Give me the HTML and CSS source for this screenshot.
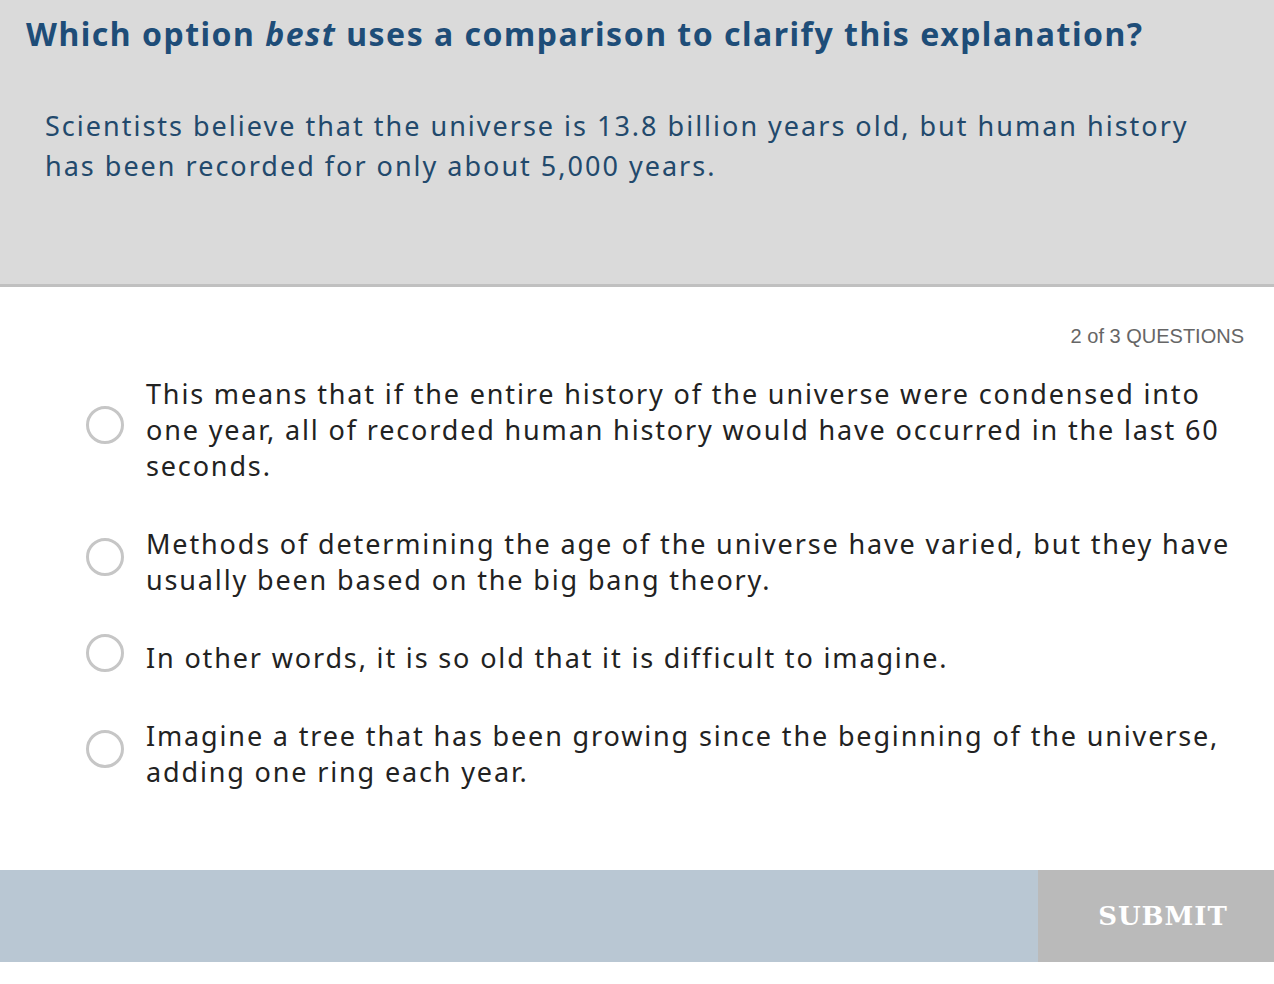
FILE: index.html
```html
<!DOCTYPE html>
<html lang="en">
<head>
<meta charset="utf-8">
<title>Question 2 of 3</title>
<link rel="stylesheet" href="styles.css">
</head>
<body>
<div class="page">
  <header class="stem">
    <h1 class="prompt">Which option <em>best</em> uses a comparison to clarify this explanation?</h1>
    <p class="passage">Scientists believe that the universe is 13.8 billion years old, but human history has been recorded for only about 5,000 years.</p>
  </header>
  <main class="body">
    <div class="progress">2 of 3 QUESTIONS</div>
    <ul class="options">
      <li class="option"><span class="radio"></span><span class="label">This means that if the entire history of the universe were condensed into one year, all of recorded human history would have occurred in the last 60 seconds.</span></li>
      <li class="option"><span class="radio"></span><span class="label">Methods of determining the age of the universe have varied, but they have usually been based on the big bang theory.</span></li>
      <li class="option"><span class="radio"></span><span class="label">In other words, it is so old that it is difficult to imagine.</span></li>
      <li class="option"><span class="radio"></span><span class="label">Imagine a tree that has been growing since the beginning of the universe, adding one ring each year.</span></li>
    </ul>
  </main>
  <footer class="footer">
    <div class="footer-fill"></div>
    <button class="submit">SUBMIT</button>
  </footer>
</div>
</body>
</html>
```
FILE: styles.css
```css
html, body {
  margin: 0;
  padding: 0;
  background: #ffffff;
}
.page {
  width: 1274px;
  font-family: "Noto Sans", "Open Sans", sans-serif;
}
.stem {
  background: #dadada;
  border-bottom: 3px solid #c0c0c0;
  height: 284px;
  padding: 0;
}
.prompt {
  margin: 0;
  padding: 13px 0 0 26px;
  font-size: 32px;
  line-height: 42px;
  font-weight: 700;
  color: #1e4d78;
  letter-spacing: 1.5px;
}
.prompt em {
  font-style: italic;
}
.passage {
  margin: 0;
  padding: 51px 60px 0 45px;
  font-size: 27px;
  line-height: 40px;
  color: #22496c;
  letter-spacing: 2px;
}
.body {
  padding: 37px 30px 0 0;
  height: 583px;
  box-sizing: border-box;
}
.progress {
  text-align: right;
  font-family: "Liberation Sans", Arial, sans-serif;
  font-size: 20px;
  color: #666666;
  line-height: 24px;
}
.options {
  list-style: none;
  margin: 28px 0 0 0;
  padding: 0 0 0 86px;
}
.option {
  display: flex;
  align-items: center;
  gap: 22px;
  margin-bottom: 42px;
}
.radio {
  flex: none;
  width: 32px;
  height: 32px;
  border: 3px solid #c6c6c6;
  border-radius: 50%;
  margin-top: -10px;
}
.label {
  font-size: 27px;
  line-height: 36px;
  color: #222222;
  letter-spacing: 1.85px;
}
.footer {
  display: flex;
  height: 92px;
}
.footer-fill {
  flex: 1;
  background: #b9c7d3;
}
.submit {
  width: 236px;
  border: 0;
  margin: 0;
  background: #bababa;
  color: #ffffff;
  font-family: "DejaVu Serif", "Liberation Serif", serif;
  font-weight: 700;
  font-size: 26px;
  letter-spacing: 1px;
  padding: 0 0 0 14px;
  cursor: pointer;
}
```
